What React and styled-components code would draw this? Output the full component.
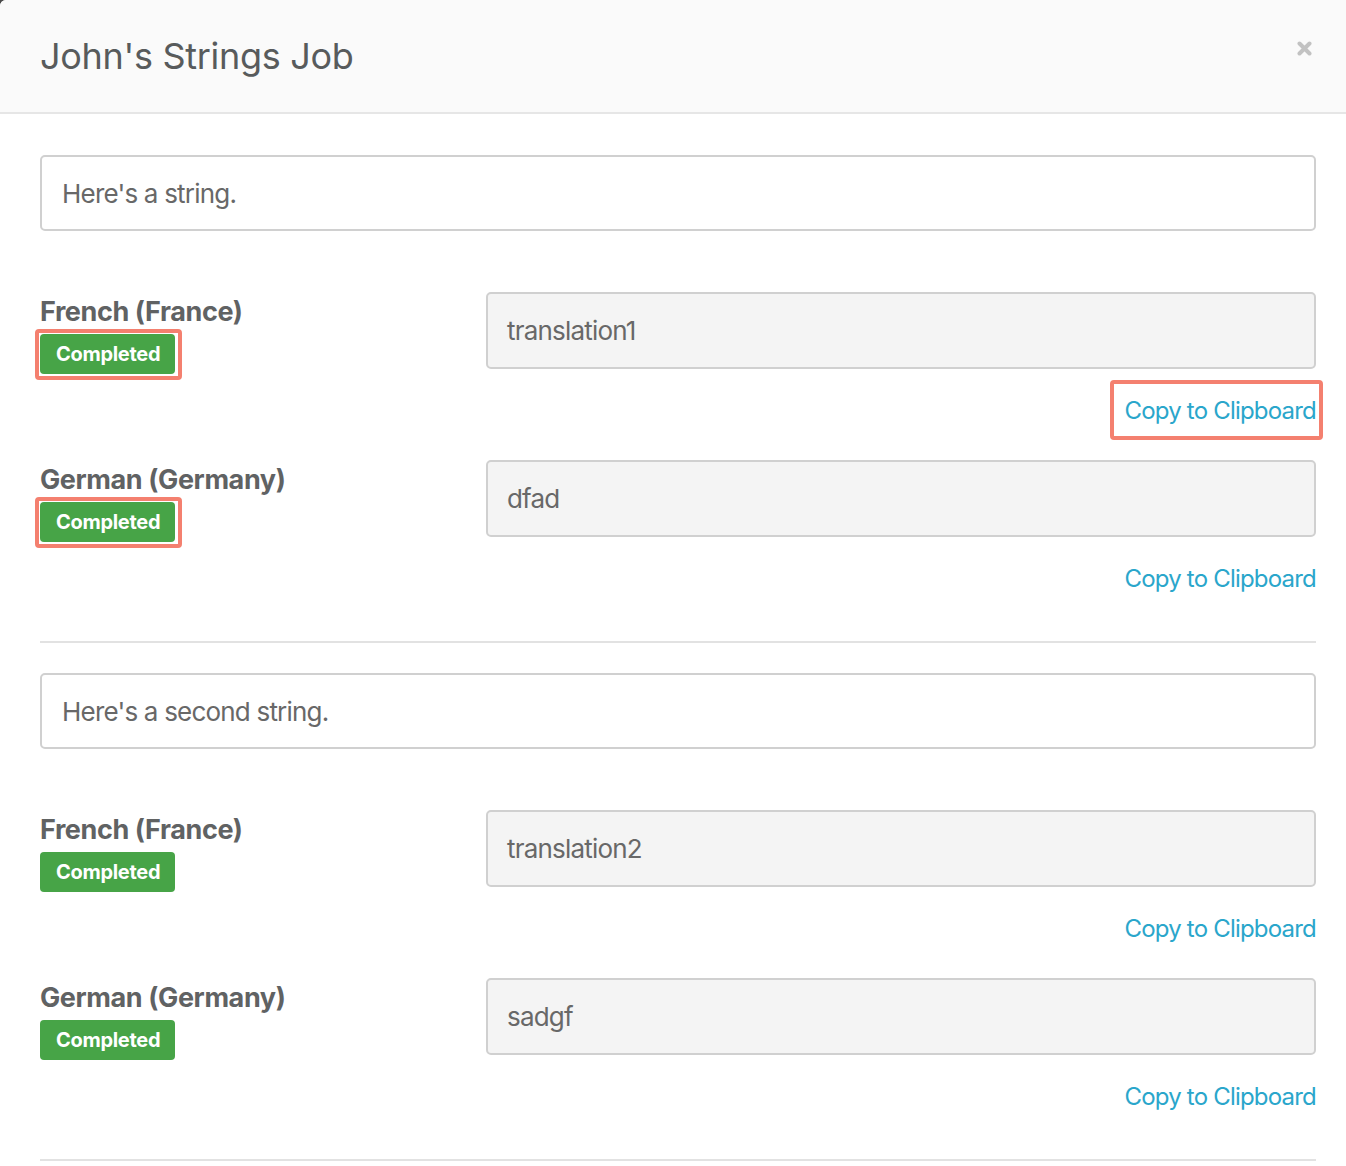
import React from 'react';
import styled, { createGlobalStyle } from 'styled-components';

const GlobalStyle = createGlobalStyle`
  body {
    margin: 0;
    background: #4a4a4a;
    font-family: Inter, "Open Sans", sans-serif;
  }
`;

const Modal = styled.div`
  background: #fff;
  border-top-left-radius: 6px;
  overflow: hidden;
  min-height: 1166px;
`;

const Header = styled.div`
  display: flex;
  align-items: center;
  justify-content: space-between;
  height: 114px;
  padding: 0 34px 0 40px;
  background: #fafafa;
  border-bottom: 2px solid #e6e6e6;
  box-sizing: border-box;

  h1 {
    margin: 0;
    font-size: 36px;
    font-weight: 400;
    color: #585b5c;
    letter-spacing: -0.3px;
  }
`;

const Close = styled.svg`
  align-self: flex-start;
  margin-top: 41px;
  width: 15px;
  height: 15px;
`;

const Body = styled.div`
  padding: 41px 30px 0 40px;
`;

const Group = styled.section`
  padding-bottom: 47px;
  border-bottom: 2px solid #e2e2e2;
  margin-bottom: 30px;
`;

const Source = styled.div`
  height: 76px;
  box-sizing: border-box;
  border: 2px solid #d0d0d0;
  border-radius: 5px;
  padding: 0 20px;
  display: flex;
  align-items: center;
  font-size: 26px;
  letter-spacing: -0.8px;
  color: #686868;
  margin-bottom: 61px;
`;

const Row = styled.div`
  display: grid;
  grid-template-columns: 446px 1fr;
  & + & {
    margin-top: 34px;
  }
`;

const Lang = styled.div`
  display: flex;
  flex-direction: column;
  align-items: flex-start;
  padding-top: 4px;

  h3 {
    margin: 0 0 6px;
    font-size: 27px;
    font-weight: 700;
    color: #606263;
    line-height: 32px;
    letter-spacing: -0.4px;
  }
`;

const Badge = styled.span`
  position: relative;
  display: inline-flex;
  align-items: center;
  height: 40px;
  padding: 0 15px 0 16px;
  background: #47a447;
  border-radius: 4px;
  color: #fff;
  font-weight: 700;
  font-size: 20px;
  letter-spacing: -0.3px;
`;

const Mark = styled.span`
  position: absolute;
  top: ${p => p.$t}px;
  right: ${p => p.$r}px;
  bottom: ${p => p.$b}px;
  left: ${p => p.$l}px;
  border: 4px solid #f4806f;
  border-radius: 4px;
  pointer-events: none;
`;

const Right = styled.div`
  display: flex;
  flex-direction: column;
  align-items: flex-end;
`;

const Translation = styled.div`
  align-self: stretch;
  height: 77px;
  box-sizing: border-box;
  background: #f4f4f4;
  border: 2px solid #d0d0d0;
  border-radius: 5px;
  padding: 0 19px;
  display: flex;
  align-items: center;
  font-size: 26px;
  letter-spacing: -0.8px;
  color: #686868;
`;

const Copy = styled.a`
  position: relative;
  margin-top: 27px;
  font-size: 24px;
  line-height: 30px;
  letter-spacing: -0.8px;
  color: #2aa6cb;
  cursor: pointer;
`;

const groups = [
  {
    text: "Here's a string.",
    rows: [
      { lang: 'French (France)', value: 'translation1', markBadge: true, markCopy: true },
      { lang: 'German (Germany)', value: 'dfad', markBadge: true },
    ],
  },
  {
    text: "Here's a second string.",
    rows: [
      { lang: 'French (France)', value: 'translation2' },
      { lang: 'German (Germany)', value: 'sadgf' },
    ],
  },
];

export default function App() {
  return (
    <>
      <GlobalStyle />
      <Modal>
        <Header>
          <h1>John's Strings Job</h1>
          <Close viewBox="0 0 15 15">
            <path d="M2.5 2.5 L12.5 12.5 M12.5 2.5 L2.5 12.5" stroke="#c2c2c2" strokeWidth="4" strokeLinecap="round" />
          </Close>
        </Header>
        <Body>
          {groups.map((g, i) => (
            <Group key={i}>
              <Source>{g.text}</Source>
              {g.rows.map((r, j) => (
                <Row key={j}>
                  <Lang>
                    <h3>{r.lang}</h3>
                    <Badge>
                      Completed
                      {r.markBadge && <Mark $t={-5} $r={-7} $b={-6} $l={-5} />}
                    </Badge>
                  </Lang>
                  <Right>
                    <Translation>{r.value}</Translation>
                    <Copy>
                      Copy to Clipboard
                      {r.markCopy && <Mark $t={-16} $r={-7} $b={-14} $l={-14} />}
                    </Copy>
                  </Right>
                </Row>
              ))}
            </Group>
          ))}
        </Body>
      </Modal>
    </>
  );
}
